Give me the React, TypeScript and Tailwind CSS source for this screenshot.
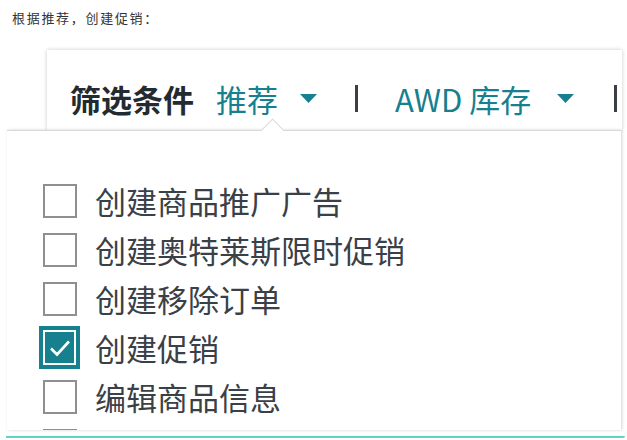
import React from "react";

const TEAL = "text-[#17808f]";

const items = [
  { label: "创建商品推广广告", checked: false },
  { label: "创建奥特莱斯限时促销", checked: false },
  { label: "创建移除订单", checked: false },
  { label: "创建促销", checked: true },
  { label: "编辑商品信息", checked: false },
  { label: "", checked: false },
];

const Caret = () => (
  <svg width="17" height="9" viewBox="0 0 17 9" className="shrink-0">
    <path d="M0 0 H17 L8.5 9 Z" fill="#17808f" />
  </svg>
);

const Checkbox = ({ checked }: { checked: boolean }) => (
  <div className="w-[41px] flex justify-center shrink-0">
    {checked ? (
      <div className="w-[41px] h-[43px] bg-[#17808f] p-[4px]">
        <div className="w-full h-full border-2 border-white flex items-center justify-center">
          <svg width="22" height="18" viewBox="0 0 22 18">
            <path d="M2 9.5 L8 15.5 L20 2.5" fill="none" stroke="#fff" strokeWidth="2.6" />
          </svg>
        </div>
      </div>
    ) : (
      <div className="w-[34px] h-[34px] border-2 border-[#8f8f8f] bg-white" />
    )}
  </div>
);

export default function App() {
  return (
    <div className="w-[627px] h-[440px] bg-white overflow-hidden font-['Noto_Sans_CJK_SC',sans-serif]">
      <p className="pl-[12px] pt-[8px] text-[13px] leading-[20px] tracking-[1.7px] text-[#333]">
        根据推荐，创建促销：
      </p>

      <div className="mt-[22px] ml-[47px] w-[575px] h-[80px] bg-white shadow-[0_0_4px_rgba(0,0,0,0.22)] flex items-start pt-[33px] pl-[23px]">
        <div className="flex items-center h-[31px] leading-[31px] text-[31px]">
          <span className="font-bold text-[#232a30]">筛选条件</span>
          <span className={`ml-[22px] ${TEAL}`}>推荐</span>
          <span className="ml-[22px]"><Caret /></span>
          <span className="ml-[38px] w-[3px] h-[27px] bg-[#3b3f45]" />
          <span className={`ml-[37px] ${TEAL}`}>AWD 库存</span>
          <span className="ml-[26px]"><Caret /></span>
          <span className="ml-[40px] w-[3px] h-[27px] bg-[#3b3f45]" />
        </div>
      </div>

      <div className="relative ml-[7px] w-[614px] h-[300px] bg-white border-t border-[#d9d9d9] shadow-[1px_0_3px_rgba(0,0,0,0.18)]">
        <div className="absolute left-[257px] top-[-9px] w-[17px] h-[17px] bg-white border-l border-t border-[#d9d9d9] rotate-45" />
        <div className="h-full overflow-hidden pt-[45px] pl-[32px]">
          {items.map((it, i) => (
            <div key={i} className="h-[49px] flex items-center">
              <Checkbox checked={it.checked} />
              <span className="ml-[15px] text-[31px] leading-[31px] text-[#3a4047]">{it.label}</span>
            </div>
          ))}
        </div>
      </div>

      <div className="mt-[6px] ml-[6px] w-[619px] h-[2px] bg-[#5fd4c4] rounded-br" />
    </div>
  );
}
